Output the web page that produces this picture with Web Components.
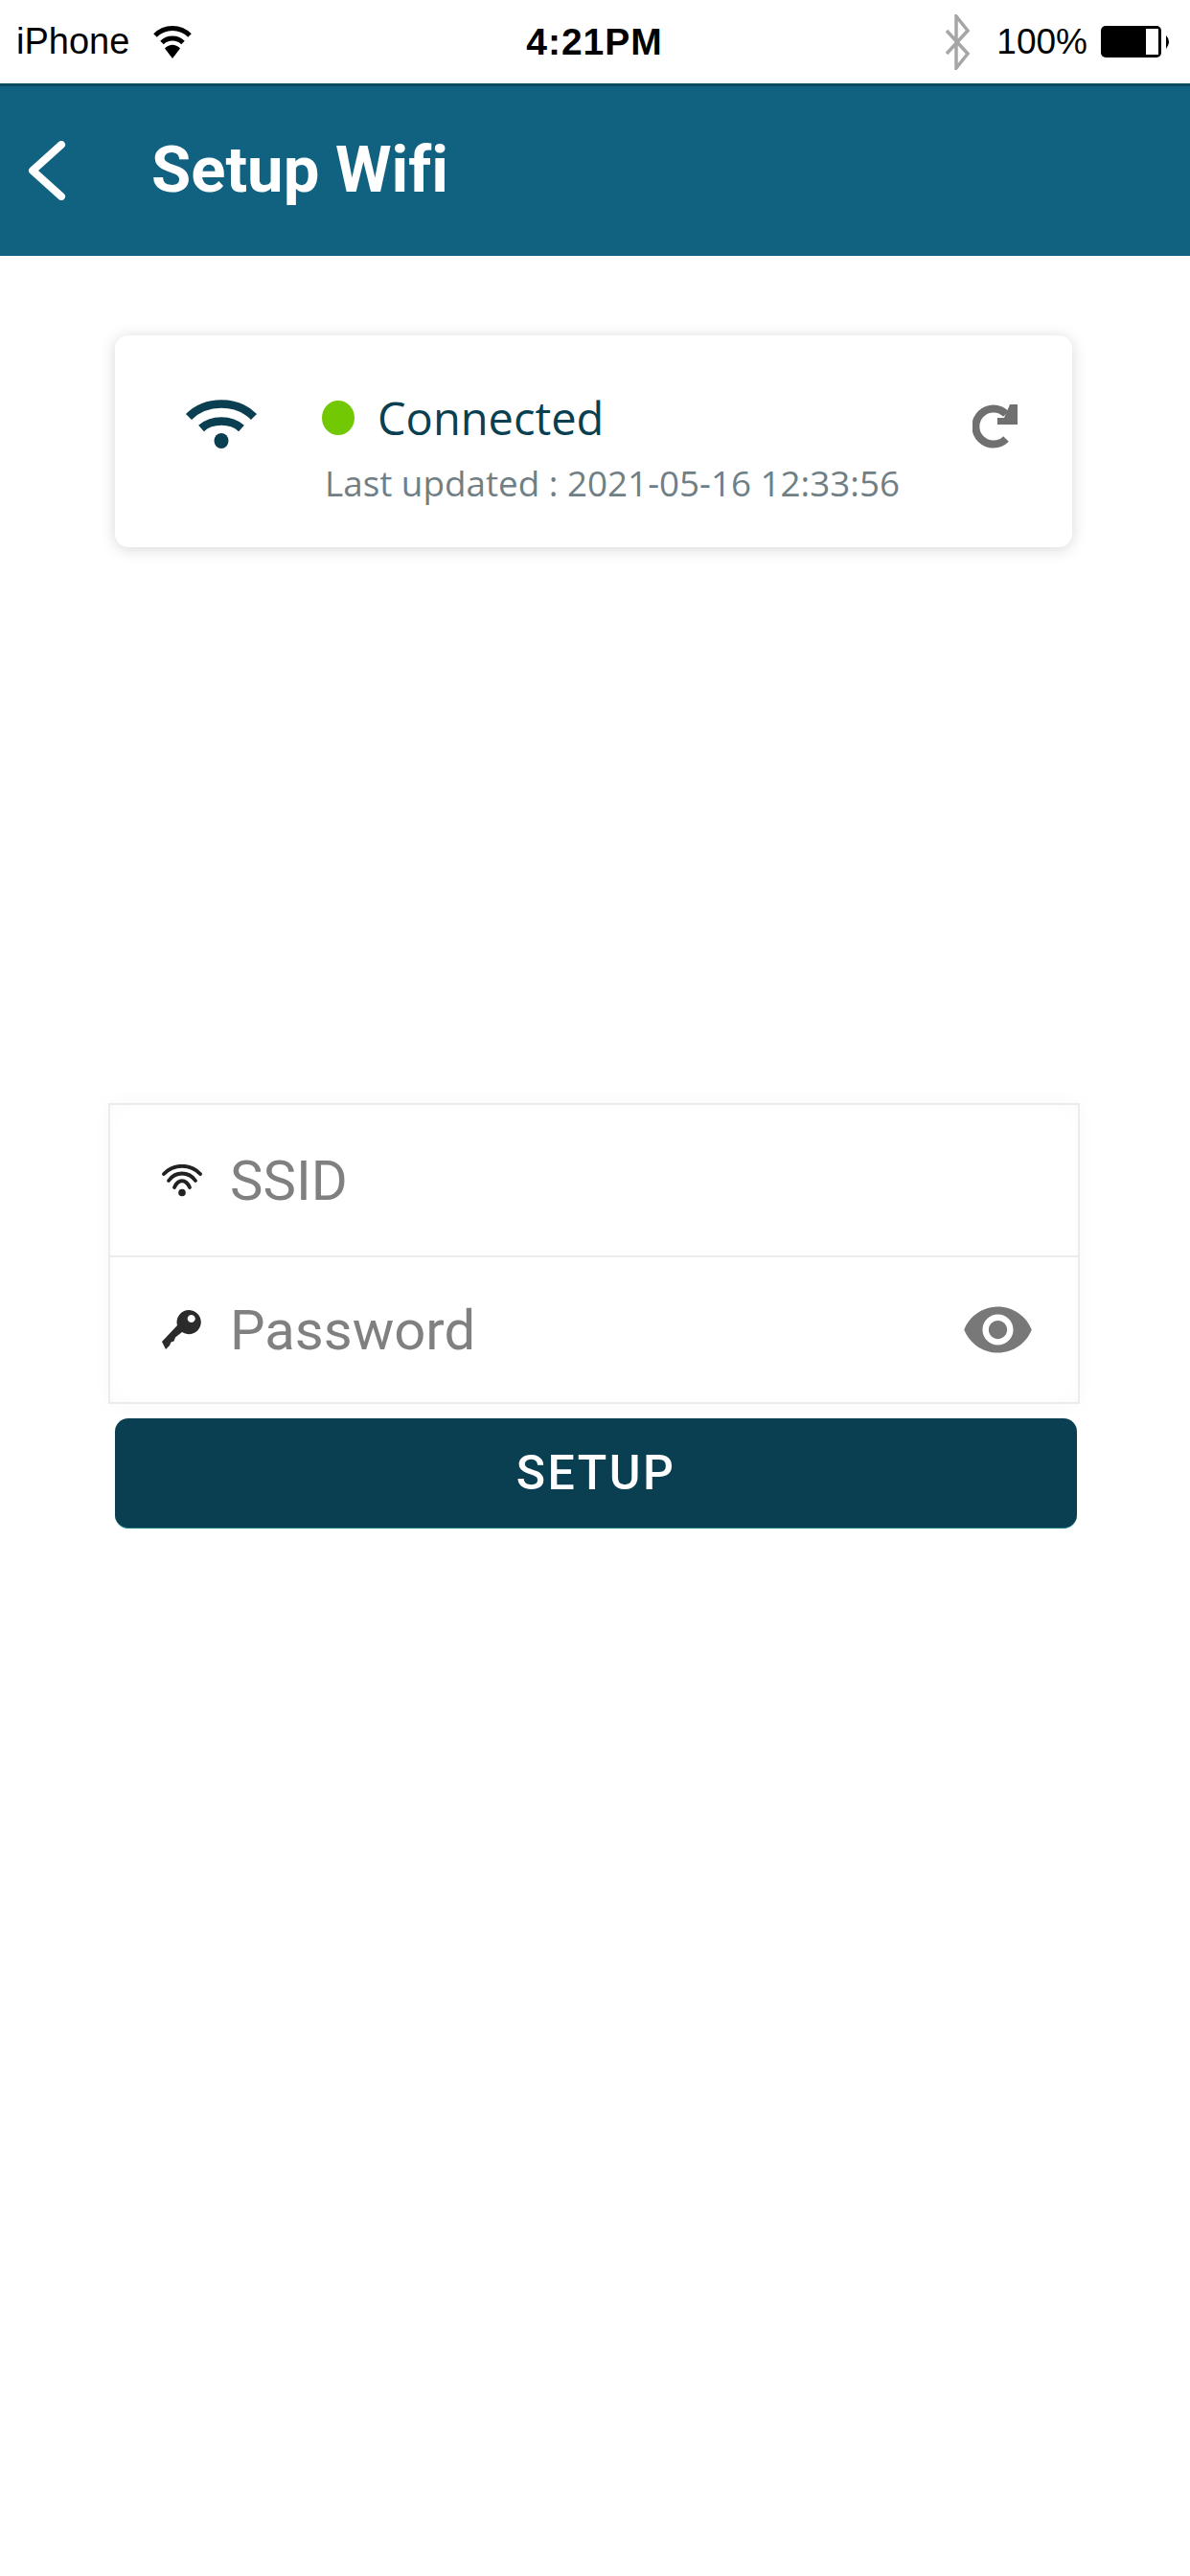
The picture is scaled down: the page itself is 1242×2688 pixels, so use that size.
<!DOCTYPE html>
<html lang="en"><head><meta charset="utf-8"><title>Setup Wifi</title>
<style>
html,body{margin:0;padding:0;background:#fff}
body{width:1242px;height:2688px;overflow:hidden;font-family:"Liberation Sans",sans-serif}
</style></head><body>
<app-screen>
  <status-bar></status-bar>
  <app-header>Setup Wifi</app-header>
  <wifi-status-card status="Connected" updated="Last updated : 2021-05-16 12:33:56"></wifi-status-card>
  <wifi-form></wifi-form>
</app-screen>
<script>
function el(name,html){
  customElements.define(name,class extends HTMLElement{
    constructor(){super();this.attachShadow({mode:'open'}).innerHTML=typeof html==='function'?html(this):html;}
  });
}
el('app-screen',`<style>:host{display:block;width:1242px}</style><slot></slot>`);
el('status-bar',`<style>
:host{display:grid;grid-template-columns:1fr auto 1fr;align-items:center;height:87px;padding:0 18px 0 17px;box-sizing:border-box;background:#fff;color:#000;font:37px "Liberation Sans",sans-serif}
.l,.r{display:flex;align-items:center}
.l span{font-size:38px}
.r{justify-content:flex-end}
.t{font-weight:700;font-size:39px;letter-spacing:1px}
.wifi{margin-left:25px}.bt{margin-right:28px}.bat{margin-left:13px}
</style>
<div class="l"><span>iPhone</span><svg class="wifi" width="40" height="36" viewBox="0 0 40 36"><path d="M2 11C12 1 28 1 38 11" fill="none" stroke="#000" stroke-width="5"/><path d="M9 18.500C15 12.500 25 12.500 31 18.500" fill="none" stroke="#000" stroke-width="5"/><path d="M12 24.500C17 19.500 23 19.500 28 24.500L20 35Z" fill="#000"/></svg></div>
<div class="t">4:21PM</div>
<div class="r"><svg class="bt" width="26" height="58" viewBox="0 0 26 58"><path d="M2 17L24 41L12 56V2L24 17L2 41" fill="none" stroke="#a6a6a6" stroke-width="3.500"/></svg><span>100%</span><svg class="bat" width="76" height="36" viewBox="0 0 76 36"><rect x="1" y="1" width="63" height="33" rx="5" fill="#000"/><rect x="48" y="4" width="13" height="27" fill="#fff"/><path d="M69 11Q75 17 69 25Z" fill="#000"/></svg></div>`);
el('app-header',`<style>
:host{display:flex;align-items:center;height:180px;box-sizing:border-box;background:#106280;border-top:3px solid #0b4a60;padding:0 0 4px 29px;color:#fff;font:700 67px Roboto,sans-serif;font-variant-ligatures:none}
svg{display:block;margin:2px 89px 0 0;flex:none}
</style><svg width="40" height="62" viewBox="0 0 40 62"><path d="M35 4L5 31L35 58" fill="none" stroke="#fff" stroke-width="8" stroke-linecap="round" stroke-linejoin="round"/></svg><slot></slot>`);
el('wifi-status-card',h=>`<style>
:host{display:flex;align-items:flex-start;box-sizing:border-box;width:999px;height:221px;margin:83px 0 0 120px;background:#fff;border-radius:14px;box-shadow:0 2px 16px rgba(0,0,0,.16);font-family:"Open Sans",sans-serif}
.wifi{flex:none;margin:66px 0 0 73px}
.col{flex:1;margin:0 0 0 67px;padding-top:56px}
.row{display:flex;align-items:center;color:#0a3f51;font-size:47px;line-height:60px}
.dot{width:34px;height:36px;border-radius:50%;background:#72c802;margin-right:24px;flex:none}
.sub{color:#6f7f85;font-size:36.800px;line-height:50px;margin:13px 0 0 3px;white-space:nowrap}
.re{flex:none;margin:72px 57px 0 0}
</style>
<svg class="wifi" width="76" height="52" viewBox="0 0 76 52"><path d="M4 19C22 1 54 1 72 19" fill="none" stroke="#0a3f51" stroke-width="8.500"/><path d="M17 31C28 21 48 21 59 31" fill="none" stroke="#0a3f51" stroke-width="8.500"/><ellipse cx="38" cy="44" rx="7.500" ry="8" fill="#0a3f51"/></svg>
<div class="col"><div class="row"><span class="dot"></span><span>${h.getAttribute('status')||'Connected'}</span></div><div class="sub">${h.getAttribute('updated')||'Last updated : 2021-05-16 12:33:56'}</div></div>
<svg class="re" width="47" height="46" viewBox="0 0 47 46"><path d="M35 36A18.500 18.500 0 1 1 35 10" fill="none" stroke="#707070" stroke-width="8"/><path d="M39 0H47V21H26V14H33Z" fill="#707070"/></svg>`);
el('wifi-form',`<style>
:host{display:block;margin:580px 0 0 113px;width:1014px}
.box{box-sizing:border-box;height:314px;border:2px solid #ececec;box-shadow:0 0 18px rgba(0,0,0,.035),inset 0 0 18px rgba(0,0,0,.02);display:flex;flex-direction:column}
.f{display:flex;align-items:center;padding-left:53px;padding-right:45px;color:#808080;font:400 58px Roboto,sans-serif}
.f.a{height:157px}.f.b{flex:1;border-top:2px solid #ececec}
.f svg.i{flex:none;margin-right:28px}
.f span{flex:1}
.btn{display:flex;align-items:center;justify-content:center;box-sizing:border-box;width:1004px;height:115px;margin:15px 0 0 7px;background:#0a3f51;border-bottom:1px solid #1a8086;border-radius:14px;color:#fff;font:500 50px Roboto,sans-serif;letter-spacing:2.500px}
</style>
<div class="box">
<div class="f a"><svg class="i" width="44" height="34" viewBox="0 0 44 34"><g fill="none" stroke="#222" stroke-width="3.800" stroke-linecap="round"><path d="M3 10C13 -1 31 -1 41 10"/><path d="M8 17C15 7 29 7 36 17"/><path d="M14 24C18 15 26 15 30 24"/></g><circle cx="22" cy="29.500" r="3.800" fill="#222"/></svg><span>SSID</span></div>
<div class="f b"><svg class="i" width="44" height="44" viewBox="0 0 44 44"><path fill="#2b2b2b" fill-rule="evenodd" d="M17 17L1 34L5 42L9 38L10.500 34.500L13.500 33.500L15 29.500L22 24A12.600 12.600 0 1 0 17 17ZM31.700 6A4 4 0 1 0 31.710 6Z"/></svg><span>Password</span><svg width="77" height="77" viewBox="0 0 24 24"><path fill="#787878" fill-rule="evenodd" d="M12 4.500C7 4.500 2.730 7.610 1 12c1.730 4.390 6 7.500 11 7.500s9.270-3.110 11-7.500c-1.730-4.390-6-7.500-11-7.500zM12 17c-2.760 0-5-2.240-5-5s2.240-5 5-5 5 2.240 5 5-2.240 5-5 5zm0-8c-1.660 0-3 1.340-3 3s1.340 3 3 3 3-1.340 3-3-1.340-3-3-3z"/></svg></div>
</div>
<div class="btn">SETUP</div>`);
</script>
</body></html>
